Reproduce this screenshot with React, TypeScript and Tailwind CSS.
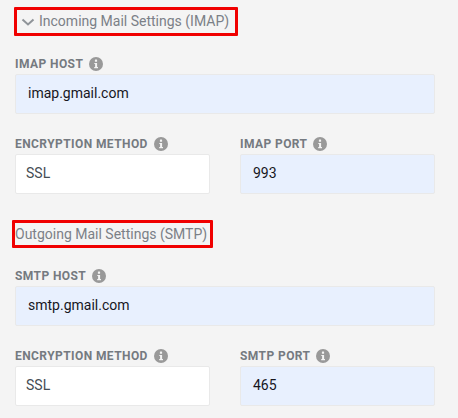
const InfoIcon = () => (
  <svg width="14" height="14" viewBox="0 0 14 14" className="shrink-0">
    <circle cx="7" cy="7" r="7" fill="#999999" />
    <rect x="5.9" y="2.6" width="2.2" height="2.1" rx="0.5" fill="#f4f4f4" />
    <path d="M5.3 5.9H8.1V10H9V11.2H5.2V10H6.1V7.1H5.3Z" fill="#f4f4f4" />
  </svg>
);

type FieldProps = {
  label: string;
  value: string;
  filled?: boolean;
};

function Field({ label, value, filled }: FieldProps) {
  return (
    <div>
      <div className="flex h-[16px] items-center gap-[6px] text-[12px] leading-[16px] font-bold tracking-[0.42px] text-[#757a80]">
        {label}
        <InfoIcon />
      </div>
      <div
        className={`mt-[2px] flex h-10 items-center rounded-[2px] border border-[#e9e9e9] pb-[1px] text-[14px] ${
          filled ? "bg-[#e8f0fe] pl-[12px] text-[#16161d]" : "bg-white pl-[10px] text-[#454c53]"
        }`}
      >
        {value}
      </div>
    </div>
  );
}

function Settings({ host, hostLabel, port, portLabel }: { host: string; hostLabel: string; port: string; portLabel: string }) {
  return (
    <div className="ml-[15px] flex w-[420px] flex-col gap-[22px]">
      <Field label={hostLabel} value={host} filled />
      <div className="grid grid-cols-[195px_195px] gap-x-[30px]">
        <Field label="ENCRYPTION METHOD" value="SSL" />
        <Field label={portLabel} value={port} filled />
      </div>
    </div>
  );
}

export default function App() {
  return (
    <div className="h-[418px] w-[458px] overflow-hidden bg-[#f4f4f4] pt-[7px] font-['Roboto',sans-serif]">
      <div className="ml-[14px] flex h-[29px] w-[224px] items-center rounded-[1px] border-[3px] border-[#f00000] pl-[3px] text-[14px] text-[#7b8087]">
        <svg width="16" height="16" viewBox="0 0 16 16" className="mr-[3px] mt-[1px]">
          <path d="M2.5 5.5L8 10.5L13.5 5.5" fill="none" stroke="#8f9499" strokeWidth="2" />
        </svg>
        Incoming Mail Settings (IMAP)
      </div>
      <div className="mt-[20px]">
        <Settings hostLabel="IMAP HOST" host="imap.gmail.com" portLabel="IMAP PORT" port="993" />
      </div>
      <div className="ml-[12px] mt-[26px] flex h-[28px] w-[201px] items-center rounded-[1px] border-[3px] border-[#f00000] text-[14px] text-[#7b8087]">
        Outgoing Mail Settings (SMTP)
      </div>
      <div className="mt-[20px]">
        <Settings hostLabel="SMTP HOST" host="smtp.gmail.com" portLabel="SMTP PORT" port="465" />
      </div>
    </div>
  );
}
